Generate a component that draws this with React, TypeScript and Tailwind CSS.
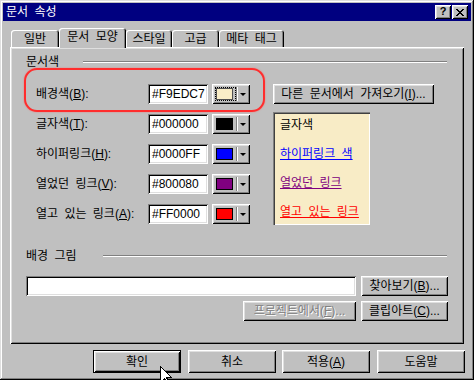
import React from "react";

const raised =
  "shadow-[inset_1px_1px_0_#fff,inset_-1px_-1px_0_#000,inset_2px_2px_0_#dfdfdf,inset_-2px_-2px_0_#808080]";
const sunken =
  "shadow-[inset_1px_1px_0_#808080,inset_-1px_-1px_0_#fff,inset_2px_2px_0_#000,inset_-2px_-2px_0_#dfdfdf]";

type Row = {
  pre: string;
  k: string;
  post: string;
  hex: string;
  swatch: string;
  focus?: boolean;
};

const rows: Row[] = [
  { pre: "배경색(", k: "B", post: "):", hex: "#F9EDC7", swatch: "bg-[#f9edc7] border-[#505050]", focus: true },
  { pre: "글자색(", k: "T", post: "):", hex: "#000000", swatch: "bg-black border-black" },
  { pre: "하이퍼링크(", k: "H", post: "):", hex: "#0000FF", swatch: "bg-[#0000ff] border-black" },
  { pre: "열었던 링크(", k: "V", post: "):", hex: "#800080", swatch: "bg-[#800080] border-black" },
  { pre: "열고 있는 링크(", k: "A", post: "):", hex: "#FF0000", swatch: "bg-[#ff0000] border-black" },
];

const xPixels: [number, number][] = [];
const xPattern = ["xx....xx", ".xx..xx.", "..xxxx..", "...xx...", "..xxxx..", ".xx..xx.", "xx....xx"];
xPattern.forEach((line, y) =>
  line.split("").forEach((c, x) => {
    if (c === "x") xPixels.push([x, y]);
  })
);

function ColorButton({ swatch, focus }: { swatch: string; focus?: boolean }) {
  return (
    <div className={`ml-[4px] w-[38px] h-[20px] bg-[#c0c0c0] ${raised} flex items-center`}>
      <div className="relative w-[24px] h-[20px] flex items-center justify-center">
        {focus && (
          <div className="absolute left-[3px] top-[3px] right-[0px] bottom-[3px] border border-dotted border-black" />
        )}
        <div className={`w-[17px] h-[12px] border ${swatch}`} />
      </div>
      <div className="w-[2px] h-[14px] border-l border-l-[#808080] border-r border-r-white" />
      <div className="w-[10px] flex items-center justify-center">
        <div className="w-0 h-0 border-l-[3px] border-r-[3px] border-t-[3px] border-l-transparent border-r-transparent border-t-black" />
      </div>
    </div>
  );
}

export default function App() {
  return (
    <div className="relative w-[474px] h-[380px] overflow-hidden bg-[#c0c0c0] p-[3px] text-[12px] leading-none text-black [word-spacing:3px] [font-family:'Liberation_Sans','Noto_Sans_CJK_KR',sans-serif] shadow-[inset_-1px_-1px_0_#000,inset_1px_1px_0_#dfdfdf,inset_-2px_-2px_0_#808080,inset_2px_2px_0_#fff]">
      {/* Title bar */}
      <div className="h-[18px] bg-[#000080] flex items-center pl-[3px] pr-[3px]">
        <span className="text-white text-[12px]">문서 속성</span>
        <div className="flex-1" />
        <div className={`w-[16px] h-[14px] bg-[#c0c0c0] ${raised} flex items-center justify-center text-[11px] font-bold pb-[1px]`}>
          ?
        </div>
        <div className={`ml-[1px] w-[16px] h-[14px] bg-[#c0c0c0] ${raised} flex items-center justify-center`}>
          <svg width="8" height="7" viewBox="0 0 8 7" shapeRendering="crispEdges">
            {xPixels.map(([x, y]) => (
              <rect key={`${x}-${y}`} x={x} y={y} width="1" height="1" fill="#000" />
            ))}
          </svg>
        </div>
      </div>

      <div className="px-[7px]">
        {/* Tabs */}
        <div className="mt-[7px] h-[19px] flex items-end">
          <div className="ml-[1px] w-[48px] h-[17px] rounded-t-[3px] flex items-center justify-center shadow-[inset_1px_1px_0_#fff,inset_-1px_0_0_#000,inset_-2px_0_0_#808080]">
            일반
          </div>
          <div className="relative z-10 -mb-[1px] w-[67px] h-[20px] bg-[#c0c0c0] rounded-t-[3px] flex items-start justify-center pt-[3px] shadow-[inset_1px_1px_0_#fff,inset_-1px_0_0_#000,inset_-2px_0_0_#808080]">
            문서 모양
          </div>
          <div className="w-[46px] h-[17px] rounded-t-[3px] flex items-center justify-center shadow-[inset_1px_1px_0_#fff,inset_-1px_0_0_#000,inset_-2px_0_0_#808080]">
            스타일
          </div>
          <div className="w-[47px] h-[17px] rounded-t-[3px] flex items-center justify-center shadow-[inset_1px_1px_0_#fff,inset_-1px_0_0_#000,inset_-2px_0_0_#808080]">
            고급
          </div>
          <div className="w-[65px] h-[17px] rounded-t-[3px] flex items-center justify-center shadow-[inset_1px_1px_0_#fff,inset_-1px_0_0_#000,inset_-2px_0_0_#808080]">
            메타 태그
          </div>
        </div>

        {/* Panel */}
        <div className="h-[297px] pt-[7px] px-[16px] flex flex-col shadow-[inset_1px_1px_0_#fff,inset_-1px_-1px_0_#000,inset_2px_2px_0_#dfdfdf,inset_-2px_-2px_0_#808080]">
          {/* Header 1 */}
          <div className="h-[16px] flex items-center">
            <span className="w-[57px]">문서색</span>
            <div className="flex-1 h-[2px] border-t border-t-[#808080] border-b border-b-white mr-[1px]" />
          </div>

          {/* Colors block */}
          <div className="mt-[14px] flex">
            <div className="ml-[10px] flex flex-col gap-[10px]">
              {rows.map((r) => (
                <div key={r.hex} className="h-[20px] flex items-center">
                  <span className="w-[112px]">
                    {r.pre}
                    <u>{r.k}</u>
                    {r.post}
                  </span>
                  <div className={`w-[60px] h-[20px] ${sunken} bg-white flex items-center pl-[4px]`}>{r.hex}</div>
                  <ColorButton swatch={r.swatch} focus={r.focus} />
                </div>
              ))}
            </div>
            <div className="ml-[23px] flex flex-col">
              <div className={`w-[161px] h-[20px] ${raised} flex items-center justify-center`}>
                다른 문서에서 가져오기(<u>I</u>)...
              </div>
              <div className="mt-[8px] w-[97px] h-[113px] bg-[#f8ecc6] pt-[3px] pl-[7px] flex flex-col gap-[9px] shadow-[inset_1px_1px_0_#808080,inset_2px_2px_0_#404040,inset_-1px_-1px_0_#fff]">
                <div className="h-[20px] flex items-center">글자색</div>
                <div className="h-[20px] flex items-center text-[#0000ff] underline">하이퍼링크 색</div>
                <div className="h-[20px] flex items-center text-[#800080] underline">열었던 링크</div>
                <div className="h-[20px] flex items-center text-[#ff0000] underline">열고 있는 링크</div>
              </div>
            </div>
          </div>

          {/* Header 2 */}
          <div className="mt-[23px] h-[16px] flex items-center">
            <span className="w-[77px]">배경 그림</span>
            <div className="flex-1 h-[2px] border-t border-t-[#808080] border-b border-b-white mr-[1px]" />
          </div>

          <div className="mt-[12px] flex">
            <div className={`w-[330px] h-[20px] bg-white ${sunken}`} />
            <div className={`ml-[5px] w-[87px] h-[20px] ${raised} flex items-center justify-center`}>
              찾아보기(<u>B</u>)...
            </div>
          </div>
          <div className="mt-[5px] flex justify-end">
            <div className={`w-[113px] h-[20px] ${raised} flex items-center justify-center text-[#808080] [text-shadow:1px_1px_0_#fff]`}>
              프로젝트에서(<u>F</u>)...
            </div>
            <div className={`ml-[5px] w-[87px] h-[20px] ${raised} flex items-center justify-center`}>
              클립아트(<u>C</u>)...
            </div>
          </div>
        </div>
      </div>

      {/* Bottom buttons */}
      <div className="mt-[6px] flex">
        <div className={`ml-[90px] w-[88px] h-[23px] border border-black ${raised} flex items-center justify-center`}>
          확인
        </div>
        <div className={`ml-[7px] w-[88px] h-[23px] ${raised} flex items-center justify-center`}>취소</div>
        <div className={`ml-[6px] w-[88px] h-[23px] ${raised} flex items-center justify-center`}>
          적용(<u>A</u>)
        </div>
        <div className={`ml-[7px] w-[88px] h-[23px] ${raised} flex items-center justify-center`}>도움말</div>
      </div>

      {/* Red annotation */}
      <div className="absolute left-[24px] top-[68px] w-[241px] h-[44px] rounded-[13px] border-2 border-[#ff2d2d] shadow-[0_0_1.5px_#ff6060]" />

      {/* Mouse cursor */}
      <svg className="absolute left-[160px] top-[366px]" width="13" height="20" viewBox="0 0 13 20" shapeRendering="crispEdges">
        <path d="M0.5 0.5 L0.5 16.5 L4.5 12.5 L7.5 18.5 L9.5 17.5 L6.5 11.5 L11.5 11.5 Z" fill="#fff" stroke="#000" strokeWidth="1" />
      </svg>
    </div>
  );
}
